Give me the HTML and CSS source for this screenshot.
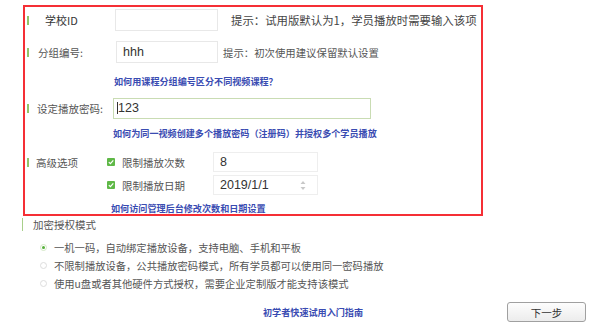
FILE: index.html
```html
<!DOCTYPE html>
<html lang="zh">
<head>
<meta charset="utf-8">
<link rel="stylesheet" href="styles.css">
</head>
<body>
<div class="page">
  <div class="box">
    <div class="row r1">
      <span class="bar"></span>
      <span class="label l1">学校ID</span>
      <div class="field f1"></div>
      <span class="hint h1">提示：试用版默认为1，学员播放时需要输入该项</span>
    </div>
    <div class="row r2">
      <span class="bar"></span>
      <span class="label l2">分组编号:</span>
      <div class="field f2">hhh</div>
      <span class="hint h2">提示：初次使用建议保留默认设置</span>
    </div>
    <div class="link-row lr1"><a class="link">如何用课程分组编号区分不同视频课程？</a></div>
    <div class="row r3">
      <span class="bar"></span>
      <span class="label l3">设定播放密码:</span>
      <div class="field f3"><span class="caret"></span>123</div>
    </div>
    <div class="link-row lr2"><a class="link">如何为同一视频创建多个播放密码（注册码）并授权多个学员播放</a></div>
    <div class="adv">
      <div class="adv-head">
        <span class="bar"></span>
        <span class="label l4">高级选项</span>
      </div>
      <div class="checks">
        <div class="check-row">
          <svg class="cb" width="8" height="8" viewBox="0 0 8 8"><rect width="8" height="8" rx="1" fill="#5fb847"/><path d="M1.8 4.1 L3.4 5.6 L6.3 2.4" stroke="#fff" stroke-width="1.2" fill="none"/></svg>
          <span class="check-text">限制播放次数</span>
          <div class="field f4">8</div>
        </div>
        <div class="check-row">
          <svg class="cb" width="8" height="8" viewBox="0 0 8 8"><rect width="8" height="8" rx="1" fill="#5fb847"/><path d="M1.8 4.1 L3.4 5.6 L6.3 2.4" stroke="#fff" stroke-width="1.2" fill="none"/></svg>
          <span class="check-text">限制播放日期</span>
          <div class="field f4 date">2019/1/1
            <svg class="spin" width="6" height="11" viewBox="0 0 6 11"><path d="M0.5 4 L3 1 L5.5 4 Z M0.5 7 L3 10 L5.5 7 Z" fill="#c8c8c8"/></svg>
          </div>
        </div>
      </div>
    </div>
    <div class="link-row lr3"><a class="link">如何访问管理后台修改次数和日期设置</a></div>
  </div>
  <div class="mode-head">
    <span class="bar"></span>
    <span class="mode-title">加密授权模式</span>
  </div>
  <div class="radios">
    <div class="radio-row"><span class="radio on"><span class="dot"></span></span><span class="radio-text">一机一码，自动绑定播放设备，支持电脑、手机和平板</span></div>
    <div class="radio-row"><span class="radio"></span><span class="radio-text">不限制播放设备，公共播放密码模式，所有学员都可以使用同一密码播放</span></div>
    <div class="radio-row"><span class="radio"></span><span class="radio-text">使用u盘或者其他硬件方式授权，需要企业定制版才能支持该模式</span></div>
  </div>
  <div class="footer">
    <a class="link guide">初学者快速试用入门指南</a>
    <button class="next">下一步</button>
  </div>
</div>
</body>
</html>
```

FILE: styles.css
```css
html, body {
  margin: 0;
  padding: 0;
  background: #fff;
}
body {
  font-family: "Noto Sans CJK SC", "Noto Sans", "Liberation Sans", sans-serif;
  color: #555;
  font-size: 10.5px;
  width: 600px;
  height: 329px;
  overflow: hidden;
}
.page {
  padding-top: 5px;
}
.box {
  margin-left: 23px;
  width: 456px;
  height: 207px;
  border: 2px solid #f52f35;
}
.row {
  display: flex;
  align-items: center;
}
.bar {
  display: inline-block;
  width: 2px;
  height: 9px;
  background: #92c46a;
  margin-left: 2px;
  flex: none;
}
.label {
  flex: none;
  white-space: nowrap;
}
.r1 { height: 26px; }
.r2 { height: 38px; }
.r3 { height: 36px; }
.l1 { width: 70px; padding-left: 16px; color: #333; font-size: 11px; }
.l2 { width: 78px; padding-left: 9px; }
.l3 { width: 76px; padding-left: 8px; }
.l4 { padding-left: 7px; }
.field {
  box-sizing: border-box;
  border: 1px solid #e8e8e8;
  background: #fff;
  font-family: "Liberation Sans", "Noto Sans", sans-serif;
  font-size: 12.5px;
  color: #333;
  display: flex;
  align-items: center;
  padding-left: 6px;
  flex: none;
}
.f1 { width: 103px; height: 22px; }
.f2 { width: 102px; height: 22px; }
.f3 {
  width: 258px;
  height: 21px;
  border-color: #c9dcb3;
  padding-left: 3px;
}
.caret {
  display: inline-block;
  width: 1px;
  height: 12px;
  background: #333;
}
.hint { white-space: nowrap; color: #555; }
.h1 { margin-left: 13px; font-size: 11.4px; color: #444; }
.h2 { margin-left: 5px; font-size: 10.4px; }
.link-row { display: flex; align-items: center; }
.link {
  color: #3a4cb2;
  font-weight: bold;
  font-size: 9.1px;
  white-space: nowrap;
  text-decoration: none;
}
.lr1 { height: 18px; padding-left: 89px; padding-top: 1px; }
.lr2 { height: 14px; padding-left: 88px; }
.lr3 { height: 14px; padding-left: 86px; padding-top: 5px; }
.adv {
  display: flex;
  padding-top: 11px;
}
.adv-head {
  display: flex;
  align-items: center;
  height: 22px;
  width: 82px;
  flex: none;
}
.checks { display: flex; flex-direction: column; gap: 1px; }
.check-row {
  display: flex;
  align-items: center;
  height: 22px;
}
.cb { flex: none; }
.check-text { margin-left: 7px; width: 91px; }
.f4 { width: 105px; height: 20px; border-color: #eee; }
.date { justify-content: space-between; padding-right: 11px; }
.spin { display: block; }
.mode-head {
  display: flex;
  align-items: center;
  height: 16px;
  margin-left: 20px;
}
.mode-head .bar { height: 13px; width: 1px; background: #a8cf8a; }
.mode-title { margin-left: 10px; }
.radios {
  margin-top: 6px;
  padding-left: 40px;
}
.radio-row {
  display: flex;
  align-items: center;
  height: 18px;
}
.radio {
  box-sizing: border-box;
  width: 7px;
  height: 7px;
  border-radius: 50%;
  border: 1px solid #ddd;
  flex: none;
  display: flex;
  align-items: center;
  justify-content: center;
}
.radio.on { border-color: #d3e8c6; }
.dot {
  width: 3px;
  height: 3px;
  border-radius: 50%;
  background: #55b03a;
}
.radio-text { margin-left: 7px; white-space: nowrap; font-size: 10.3px; }
.footer {
  display: flex;
  align-items: center;
  margin-top: 10px;
  height: 20px;
}
.guide { margin-left: 263px; }
.next {
  margin-left: 144px;
  width: 79px;
  height: 20px;
  box-sizing: border-box;
  border: 1px solid #a0a0a0;
  border-radius: 3px;
  background: linear-gradient(#fdfdfd, #ececec);
  font-family: "Noto Sans CJK SC", sans-serif;
  font-size: 10.5px;
  color: #333;
  padding: 0;
}
```
